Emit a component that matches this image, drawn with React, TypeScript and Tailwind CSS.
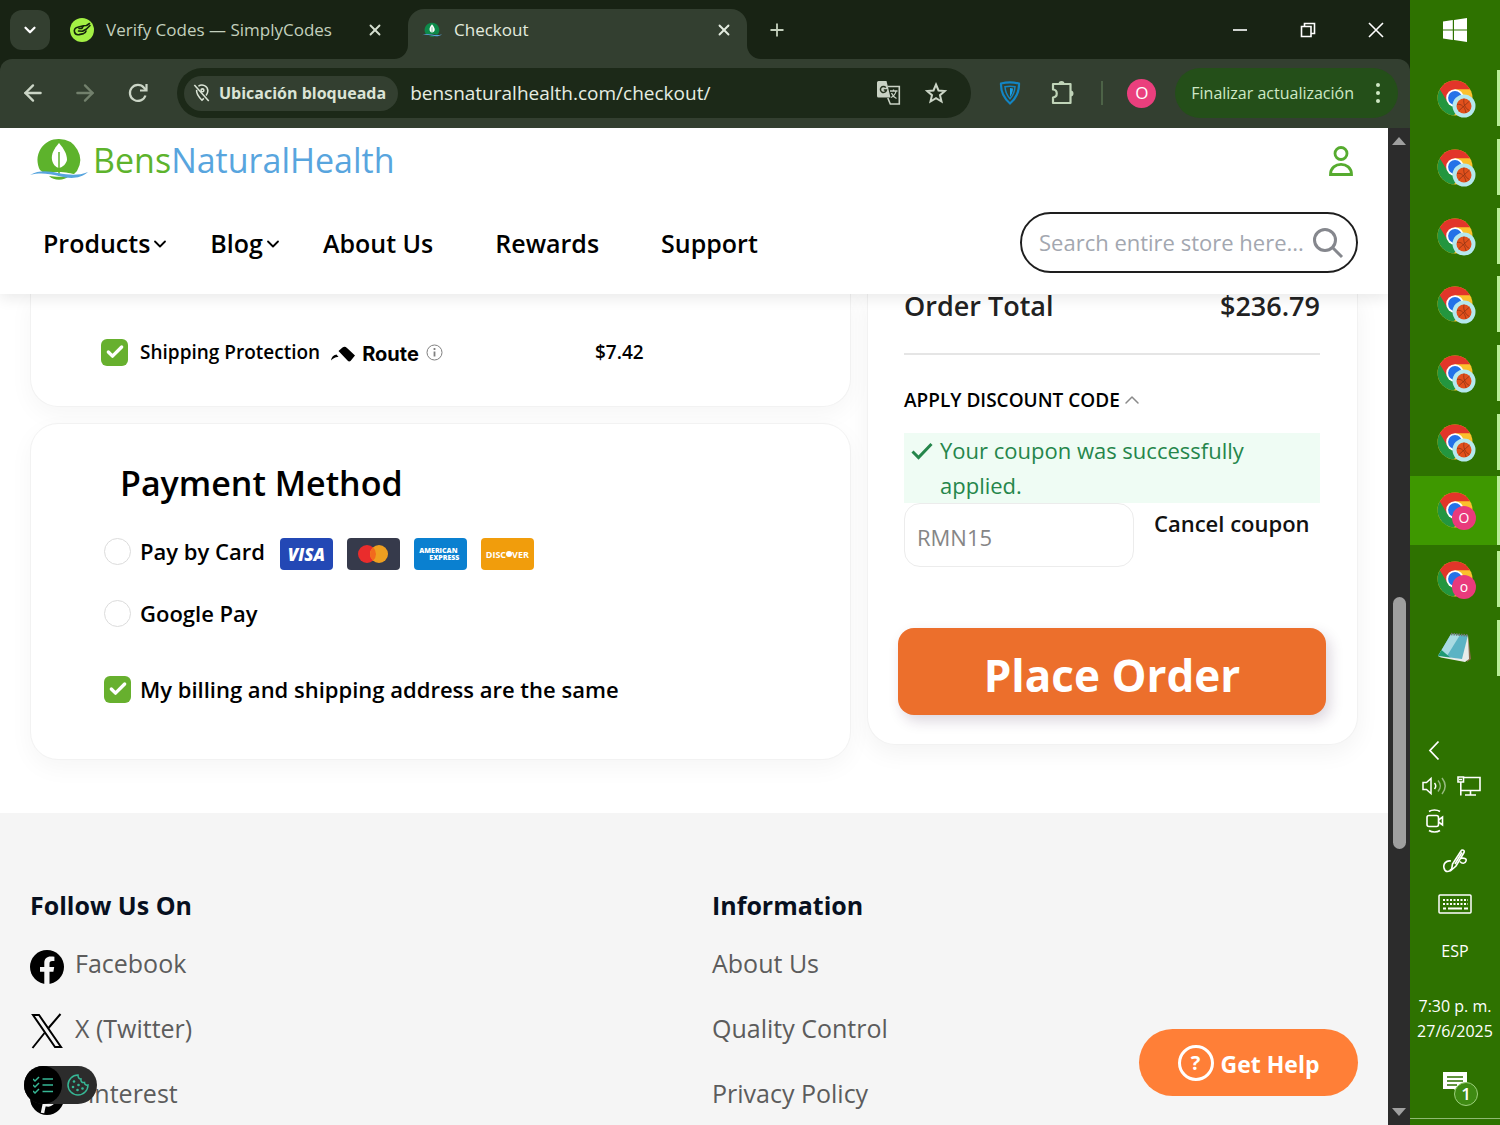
import { ReactNode, useState } from "react";
import { ArrowLeft, ArrowRight, Check, ChevronDown, ChevronUp, Plus, X } from "lucide-react";

const navItems = [
  { label: "Products", menu: true },
  { label: "Blog", menu: true },
  { label: "About Us", menu: false },
  { label: "Rewards", menu: false },
  { label: "Support", menu: false },
];

const taskbarApps = ["ball", "ball", "ball", "ball", "ball", "ball", "active", "profile", "notepad"];

/* ---------- icons ---------- */

function SimplyCodesIcon() {
  return (
    <svg viewBox="0 0 24 24" className="size-6 shrink-0" aria-hidden="true">
      <circle cx="12" cy="12" r="12" fill="#a3f044" />
      <g fill="none" stroke="#14240c" strokeWidth="1.600" strokeLinecap="round" strokeLinejoin="round">
        <path d="M12.500 8 7.500 9.200a3.700 3.700 0 0 0-3 4.800c.6 2.200 2.300 3 4.500 2.600l4.500-1a3.600 3.600 0 0 0 2.500-2.600" />
        <path d="m8.500 13 4 .3 4-2.300L20 7.500M12 10l1.500-2.200 3-.3 3-2M9 10.500h3" />
      </g>
    </svg>
  );
}

function LeafIcon({ className, disc }: { className: string; disc: string }) {
  return (
    <svg viewBox="0 0 58 44" className={className} aria-hidden="true">
      <path d="M29 1a21 21 0 0 0-19 31l4 3c8-2 24-1 30 1l3-3A21 21 0 0 0 29 1Z" fill={disc} />
      <path d="M19 38c6 1 14 1 20 0-5 5-15 5-20 0Z" fill={disc} />
      <path d="M29 5c-5 6-8 11-7 17 1 4 3 7 7 8 4-1 7-4 8-8 0-6-3-11-8-17Z" fill="#fff" />
      <path d="M29 14v24" stroke={disc} strokeWidth="1.500" />
      <path d="M0 37c9-5 18-4 28-2 11 2 20 3 30-1-8 7-18 7-29 4-10-2-18-4-29-1Z" fill="#58a5de" />
    </svg>
  );
}

function ReloadIcon() {
  return (
    <svg viewBox="0 0 24 24" className="size-6" fill="none" stroke="currentColor" strokeWidth="2.200" aria-hidden="true">
      <path d="M19.500 14.500A8 8 0 1 1 18 6.700l2 2.300" />
      <path d="M20.500 3v6.500H14" />
    </svg>
  );
}

function LocationOffIcon() {
  return (
    <svg viewBox="0 0 20 22" className="h-5 w-[18px]" fill="none" stroke="currentColor" strokeWidth="1.700" aria-hidden="true">
      <path d="M6 3.500A6.500 6.500 0 0 1 16.500 8.500c0 1.800-.8 3.600-2 5.300M4 7.500c-.6 4.200 2.500 8 6 11.500l2-2" />
      <circle cx="10.500" cy="8" r="1.600" />
      <path d="m1.500 2 16 18" />
    </svg>
  );
}

function TranslateIcon() {
  return (
    <svg viewBox="0 0 24 24" className="size-6" aria-hidden="true">
      <path d="M1.500 0h8l4 16.500h-12A1.500 1.500 0 0 1 0 15V1.500A1.500 1.500 0 0 1 1.500 0Z" fill="#c9d2c4" />
      <path d="M10.500 5.500h11.800v17.500h-9l-2.500-6" fill="none" stroke="#c9d2c4" strokeWidth="1.600" />
      <path d="M8.800 6.600A3 3 0 1 0 9.400 9H6.800" fill="none" stroke="#26321f" strokeWidth="1.500" />
      <path d="M13 10h7.500M16.500 8.500V10M19 10c-.5 3-3 5.500-5 6.500M14.500 12c1 2.500 3 4.500 5 5.500" fill="none" stroke="#c9d2c4" strokeWidth="1.300" />
    </svg>
  );
}

function StarIcon() {
  return (
    <svg viewBox="0 0 24 24" className="size-6" fill="none" stroke="currentColor" strokeWidth="2" strokeLinejoin="miter" aria-hidden="true">
      <path d="m12 3.500 2.500 6 6.300.5-4.800 4.200 1.500 6.300L12 17.200l-5.500 3.300L8 14.200 3.200 10l6.300-.5Z" />
    </svg>
  );
}

function ShieldIcon() {
  return (
    <svg viewBox="0 0 22 26" className="h-[26px] w-[22px]" fill="none" aria-hidden="true">
      <path d="M2 3.500c6-1.500 12-1.500 18 0 .3 8-3 15-9 20C5 18.500 1.700 11.500 2 3.500Z" stroke="#1385c4" strokeWidth="2.200" />
      <path d="M6 6.700c3.500-.8 6.500-.8 10 0-.3 5-1.800 8.500-5 12-3.200-3.500-4.700-7-5-12Z" stroke="#1385c4" strokeWidth="1.500" />
      <path d="M11 8v9c1.800-2.500 2.700-5 3-8.500Z" fill="#1ba0e8" />
    </svg>
  );
}

function PuzzleIcon() {
  return (
    <svg viewBox="0 0 26 26" className="size-[26px]" fill="none" stroke="currentColor" strokeWidth="2.200" strokeLinejoin="round" aria-hidden="true">
      <path d="M3 4h17.500v19H3v-5.500c5-.5 5-7.500 0-8Z" />
      <path d="M8.500 4a3 3 0 0 1 6 0ZM20.500 10.500a3 3 0 0 1 0 6Z" fill="currentColor" stroke="none" />
    </svg>
  );
}

function ChromeIcon() {
  return (
    <svg viewBox="0 0 36 36" className="size-9" aria-hidden="true">
      <circle cx="18" cy="18" r="17.500" fill="#fbc02d" />
      <path d="M18 18 2.800 9.300A17.500 17.500 0 0 0 17 35.500l8-13Z" fill="#23963f" />
      <path d="M2.800 9.300a17.500 17.500 0 0 1 30.400 0H18l-7.500 12.700Z" fill="#e2352a" />
      <circle cx="18" cy="18" r="8.800" fill="#fff" />
      <circle cx="18" cy="18" r="6.900" fill="#2472e8" />
    </svg>
  );
}

function BasketballBadge() {
  return (
    <svg viewBox="0 0 24 24" className="size-6" aria-hidden="true">
      <circle cx="12" cy="12" r="11.500" fill="#b5e8ee" />
      <circle cx="12" cy="12" r="7.500" fill="#e2501c" />
      <path d="m6.500 17 11-10M12 4.500c-1 5 1 10 5.500 12M5 10.500c4-1 8 2 9 8.500" fill="none" stroke="#8f3414" strokeWidth=".8" />
    </svg>
  );
}

function NotepadIcon() {
  return (
    <svg viewBox="0 0 36 36" className="size-9" aria-hidden="true">
      <path d="m31 5 3 24-4 3Z" fill="#8a6a4a" />
      <path d="m14 4 17 1.500-5 24.500L1 26Z" fill="#5bb3c4" />
      <path d="m14 4 9 1L9 27.500 1 26Z" fill="#a9dbe2" />
      <path d="m4.500 20 10 8.500L1 26Z" fill="#1f9a74" />
      <path d="m31 5 1 24-4 3-24-4.500L1 26l24 3Z" fill="#e8ecea" />
      <path d="m14 4 17 1.500" stroke="#707a76" strokeWidth="2.500" strokeDasharray="1.500 1" />
    </svg>
  );
}

function FacebookIcon() {
  return (
    <svg viewBox="0 0 34 34" className="mt-[6px] size-[34px]" aria-hidden="true">
      <circle cx="17" cy="17" r="17" />
      <path d="M14.300 34V21.800H10v-4.900h4.300v-3.800c0-4.300 2.500-6.600 6.400-6.600 1.300 0 2.600.1 3.700.3v4.300h-2.100c-2.100 0-2.800 1.200-2.800 2.600v3.200h4.700l-.8 4.900h-3.900V34Z" fill="#f5f5f5" />
    </svg>
  );
}

function XLogo() {
  return (
    <svg viewBox="0 0 34 36" className="mt-1 h-9 w-[34px]" fill="none" stroke="#000" strokeWidth="2" aria-hidden="true">
      <path d="M3 2h6l22 32h-6Z" />
      <path d="M30.500 1 18.500 15M14.500 20 2.500 35" />
    </svg>
  );
}

function PinterestIcon() {
  return (
    <svg viewBox="0 0 34 34" className="mt-2 size-[34px]" aria-hidden="true">
      <circle cx="17" cy="17" r="17" />
      <path d="M12.500 32 16 15M14.500 22c3 3.500 9 2 10.500-5 .8-6-3-9-8-9-6 0-9 5-7.500 10" fill="none" stroke="#f5f5f5" strokeWidth="3.500" />
    </svg>
  );
}

/* ---------- browser chrome ---------- */

function TabStrip() {
  return (
    <div className="flex h-[59px] items-center bg-[#182314] pl-[10px] text-[#c3d0bd]">
      <button aria-label="Search tabs" className="flex size-10 items-center justify-center rounded-xl bg-[#333f30] text-white">
        <ChevronDown className="size-[18px]" strokeWidth={3} />
      </button>
      <div className="ml-5 flex w-[338px] items-center">
        <SimplyCodesIcon />
        <span className="ml-3 flex-1 text-[17px] whitespace-nowrap">Verify Codes — SimplyCodes</span>
        <button aria-label="Close tab" className="mr-6 text-[#d5dfd0]">
          <X className="size-[18px]" strokeWidth={2.500} />
        </button>
      </div>
      <div className="relative flex h-[50px] w-[339px] items-center self-end rounded-t-2xl bg-[#333f30] px-[14px] pb-2 text-[#e3ebdf]">
        <svg viewBox="0 0 14 14" className="absolute bottom-0 -left-[14px] size-[14px]" aria-hidden="true">
          <path d="M14 0v14H0A14 14 0 0 0 14 0Z" fill="#333f30" />
        </svg>
        <svg viewBox="0 0 14 14" className="absolute -right-[14px] bottom-0 size-[14px]" aria-hidden="true">
          <path d="M0 0v14h14A14 14 0 0 1 0 0Z" fill="#333f30" />
        </svg>
        <LeafIcon className="h-4 w-5" disc="#0d8a4a" />
        <span className="ml-3 flex-1 text-[17px]">Checkout</span>
        <button aria-label="Close tab">
          <X className="size-[18px]" strokeWidth={2.500} />
        </button>
      </div>
      <button aria-label="New tab" className="ml-5">
        <Plus className="size-5" strokeWidth={2.200} />
      </button>
      <div className="ml-auto flex items-center gap-[50px] pr-[25px] text-white">
        <button aria-label="Minimize">
          <svg viewBox="0 0 18 18" className="size-[18px]" aria-hidden="true">
            <path d="M2 9h14" stroke="currentColor" strokeWidth="1.600" />
          </svg>
        </button>
        <button aria-label="Restore">
          <svg viewBox="0 0 18 18" className="size-[18px]" fill="none" stroke="currentColor" strokeWidth="1.600" aria-hidden="true">
            <path d="M2.500 5.500h9.500v10H2.500ZM5.500 5.500v-3H15.500v10H12" />
          </svg>
        </button>
        <button aria-label="Close window">
          <svg viewBox="0 0 18 18" className="size-[18px]" aria-hidden="true">
            <path d="m2 2 14 14M16 2 2 16" stroke="currentColor" strokeWidth="1.600" />
          </svg>
        </button>
      </div>
    </div>
  );
}

function Toolbar() {
  return (
    <div className="bg-[#182314]">
      <div className="flex h-[69px] items-center rounded-t-xl bg-[#333f30] pr-3 pb-px pl-5 text-[#cbd5c6]">
        <button aria-label="Back">
          <ArrowLeft className="size-[26px]" strokeWidth={2.200} />
        </button>
        <button aria-label="Forward" className="ml-[26px] text-[#72806c]">
          <ArrowRight className="size-[26px]" strokeWidth={2.200} />
        </button>
        <button aria-label="Reload" className="ml-7">
          <ReloadIcon />
        </button>
        <div className="ml-[27px] flex h-[50px] flex-1 items-center rounded-full bg-[#1c2918] pr-[23px] pl-[7px]">
          <button className="flex h-[35px] items-center gap-2 rounded-full bg-[#333f30] pr-3 pl-[9px] text-[16px] font-bold whitespace-nowrap text-[#dbe4d6]">
            <LocationOffIcon />
            Ubicación bloqueada
          </button>
          <input
            aria-label="Address"
            defaultValue="bensnaturalhealth.com/checkout/"
            className="ml-3 min-w-0 flex-1 bg-transparent text-[19px] text-[#e6ede2] outline-none"
          />
          <button aria-label="Translate">
            <TranslateIcon />
          </button>
          <button aria-label="Bookmark" className="ml-[23px]">
            <StarIcon />
          </button>
        </div>
        <button aria-label="Shield extension" className="ml-[28px]">
          <ShieldIcon />
        </button>
        <button aria-label="Extensions" className="ml-[29px] text-[#c0d4b8]">
          <PuzzleIcon />
        </button>
        <div className="ml-[25px] h-6 w-[2px] bg-[#4d6347]" />
        <button className="ml-6 flex size-[29px] items-center justify-center rounded-full bg-[#ea3f7d] text-[17px] text-white">O</button>
        <button className="ml-[19px] flex h-[50px] items-center gap-[18px] rounded-full bg-[#244f19] pr-[14px] pl-4 text-[16px] whitespace-nowrap text-[#cfe8c5]">
          Finalizar actualización
          <span className="flex w-3 flex-col items-center gap-1">
            <span className="size-1 rounded-full bg-[#cfe8c5]" />
            <span className="size-1 rounded-full bg-[#cfe8c5]" />
            <span className="size-1 rounded-full bg-[#cfe8c5]" />
          </span>
        </button>
      </div>
    </div>
  );
}

function Scrollbar() {
  return (
    <div className="flex w-[22px] shrink-0 flex-col items-center bg-[#2c2c2c]">
      <svg viewBox="0 0 14 8" className="mt-[9px] h-2 w-[14px]" aria-hidden="true">
        <path d="m7 0 7 8H0Z" fill="#a0a0a0" />
      </svg>
      <div className="mt-[452px] h-[252px] w-[13px] rounded-full bg-[#9f9f9f]" />
      <svg viewBox="0 0 14 8" className="mt-auto mb-[9px] h-2 w-[14px]" aria-hidden="true">
        <path d="m7 8 7-8H0Z" fill="#a0a0a0" />
      </svg>
    </div>
  );
}

/* ---------- store page ---------- */

function SiteHeader() {
  return (
    <header className="relative z-10 shrink-0 bg-white px-[30px] shadow-[0_4px_14px_rgba(0,0,0,0.09)]">
      <div className="flex h-[66px] items-center justify-between pr-1">
        <a href="#home" className="flex items-center gap-[5px] pb-[2px] text-[34px] leading-none text-[#58a5de]">
          <LeafIcon className="h-11 w-[58px]" disc="#5db32c" />
          <span>
            <span className="text-[#5db32c]">Bens</span>NaturalHealth
          </span>
        </a>
        <a href="#account" aria-label="My account">
          <svg viewBox="0 0 26 30" className="h-[30px] w-[26px]" fill="none" stroke="#56ab2f" strokeWidth="2.800" aria-hidden="true">
            <circle cx="13" cy="7.500" r="6" />
            <path d="M2.500 28.500c0-13.500 21-13.500 21 0Z" />
          </svg>
        </a>
      </div>
      <div className="flex items-center pt-[18px] pb-[21px]">
        <nav className="flex flex-1 gap-10 pt-[2px] pl-[13px] text-[25px] font-semibold text-black">
          {navItems.map((item) => (
            <a key={item.label} href="#nav" className={item.menu ? "flex items-center whitespace-nowrap" : "pr-[22px] whitespace-nowrap"}>
              {item.label}
              {item.menu && <ChevronDown className="size-5" strokeWidth={2.200} />}
            </a>
          ))}
        </nav>
        <div className="flex h-[61px] w-[338px] items-center rounded-full border-2 border-[#1e1e1e] pr-3 pl-[17px]">
          <input
            aria-label="Search"
            placeholder="Search entire store here..."
            className="min-w-0 flex-1 bg-transparent text-[22px] outline-none placeholder:text-[#a3a7b0]"
          />
          <button aria-label="Search store">
            <svg viewBox="0 0 32 32" className="size-8" fill="none" stroke="#85878d" strokeWidth="3" aria-hidden="true">
              <circle cx="13" cy="13" r="10.500" />
              <path d="m20.500 20.500 9.500 9.500" />
            </svg>
          </button>
        </div>
      </div>
    </header>
  );
}

function GreenCheckbox({ id }: { id: string }) {
  return (
    <span className="grid size-[27px] shrink-0">
      <input
        id={id}
        type="checkbox"
        defaultChecked
        className="peer col-start-1 row-start-1 size-[27px] appearance-none rounded-md bg-white ring-1 ring-[#ddd] ring-inset checked:bg-[#67b02e] checked:ring-0"
      />
      <Check className="pointer-events-none col-start-1 row-start-1 size-5 place-self-center text-white" strokeWidth={4} />
    </span>
  );
}

function CardBadge({ color, children }: { color: string; children: ReactNode }) {
  return <span className={`flex h-8 w-[53px] flex-col items-center justify-center rounded-[4px] text-white ${color}`}>{children}</span>;
}

function PaymentSection() {
  const [method, setMethod] = useState("");
  const radioCls = "size-[27px] shrink-0 appearance-none rounded-full border border-[#dcdcdc] bg-white checked:border-8 checked:border-[#67b02e]";

  return (
    <section className="rounded-[28px] border border-[#f2f2f2] bg-white pt-[35px] pb-[52px] pl-[73px] shadow-[0_8px_24px_rgba(0,0,0,0.04)]">
      <h2 className="pl-4 text-[34px] leading-[48px] font-semibold text-black">Payment Method</h2>
      <div className="mt-[26px] flex h-9 items-center text-[22px] font-semibold text-black">
        <input id="card" type="radio" name="method" className={radioCls} checked={method === "card"} onChange={() => setMethod("card")} />
        <label htmlFor="card" className="pl-[9px]">
          Pay by Card
        </label>
        <div className="flex gap-[14px] pt-[6px] pl-[15px]">
          <CardBadge color="bg-[#2348b5]">
            <span className="text-[17px] leading-none font-extrabold italic">VISA</span>
          </CardBadge>
          <CardBadge color="bg-[#363a4b]">
            <svg viewBox="0 0 30 18" className="h-[18px] w-[30px]" role="img" aria-label="Mastercard">
              <circle cx="9" cy="9" r="9" fill="#ea2c2c" />
              <circle cx="21" cy="9" r="9" fill="#ee9f20" />
              <path d="M15 2.300a9 9 0 0 1 0 13.400 9 9 0 0 1 0-13.400Z" fill="#f26a1d" />
            </svg>
          </CardBadge>
          <CardBadge color="bg-[#0a80d0]">
            <span className="mr-1 text-[7px] leading-[7px] font-extrabold">AMERICAN</span>
            <span className="ml-2 text-[7px] leading-[7px] font-extrabold">EXPRESS</span>
          </CardBadge>
          <CardBadge color="bg-[#f19d0c]">
            <span className="flex items-center text-[9px] leading-none font-bold">
              DISC
              <span className="size-[6px] rounded-full bg-white" />
              VER
            </span>
          </CardBadge>
        </div>
      </div>
      <div className="mt-[26px] flex h-9 items-center text-[22px] font-semibold text-black">
        <input id="gpay" type="radio" name="method" className={radioCls} checked={method === "gpay"} onChange={() => setMethod("gpay")} />
        <label htmlFor="gpay" className="pl-[9px]">
          Google Pay
        </label>
      </div>
      <div className="mt-10 flex h-9 items-center text-[22px] font-semibold text-black">
        <GreenCheckbox id="same" />
        <label htmlFor="same" className="pl-[9px]">
          My billing and shipping address are the same
        </label>
      </div>
    </section>
  );
}

function ShippingSection() {
  return (
    <section className="flex h-[113px] items-center rounded-b-[28px] border border-t-0 border-[#f2f2f2] bg-white pt-1 pl-[70px] shadow-[0_8px_24px_rgba(0,0,0,0.04)]">
      <div className="flex w-[494px] items-center whitespace-nowrap text-black">
        <GreenCheckbox id="protection" />
        <label htmlFor="protection" className="pl-3 text-[19px] font-semibold">
          Shipping Protection
        </label>
        <svg viewBox="0 0 24 16" className="mt-1 ml-[11px] h-4 w-6" aria-hidden="true">
          <path d="m7.500 5 4-3.500c1.500-1 3-1 4.500.5l8 7.500-4.500 5.500c-1 .7-2 .5-3-.5Z" />
          <path d="M0 14.500c.5-3.500 2-5.500 5.500-6l2 2.500c-2.500-.5-5 1-7.500 3.500Z" />
        </svg>
        <span className="mt-1 ml-[7px] font-['Inter',sans-serif] text-[20px] leading-6 font-bold">Route</span>
        <svg viewBox="0 0 17 17" className="ml-[7px] size-[17px]" fill="none" stroke="#808080" role="img" aria-label="About shipping protection">
          <circle cx="8.500" cy="8.500" r="7.500" />
          <path d="M8.500 7.500v5M8.500 4v2" strokeWidth="1.800" />
        </svg>
      </div>
      <span className="text-[19px] font-semibold text-black">$7.42</span>
    </section>
  );
}

function OrderSummary() {
  return (
    <section className="w-[491px] shrink-0 self-start rounded-b-[28px] border border-t-0 border-[#f2f2f2] bg-white pr-[37px] pb-[29px] pl-9 shadow-[0_8px_24px_rgba(0,0,0,0.05)]">
      <div className="flex justify-between border-b-2 border-[#e5e5e5] pb-9 text-[27px] leading-[23px] font-semibold text-[#222]">
        <span>Order Total</span>
        <span>$236.79</span>
      </div>
      <button className="mt-[33px] flex h-6 items-center text-[19px] font-semibold text-black">
        APPLY DISCOUNT CODE
        <ChevronUp className="size-6 text-[#8a8a8a]" strokeWidth={1.500} />
      </button>
      <div className="mt-[21px] flex bg-[#effcf4] pr-10 pl-[7px] text-[22px] leading-[35px] text-[#25864b]">
        <svg viewBox="0 0 22 18" className="mt-[9px] mr-[7px] h-[18px] w-[22px] shrink-0" fill="none" stroke="currentColor" strokeWidth="3" aria-hidden="true">
          <path d="m1.500 9.500 6 6L20.500 2" />
        </svg>
        <p>Your coupon was successfully applied.</p>
      </div>
      <div className="flex items-start">
        <input
          aria-label="Discount code"
          defaultValue="RMN15"
          className="h-16 w-[230px] rounded-2xl border border-[#ececec] bg-white px-3 pt-1 text-[22px] text-[#868686] outline-none"
        />
        <button className="ml-5 h-10 text-[22px] font-semibold whitespace-nowrap text-[#111]">Cancel coupon</button>
      </div>
      <div className="-mx-[6px] mt-[61px]">
        <button className="h-[87px] w-full rounded-2xl bg-[#ec6f2c] pt-[6px] text-[44px] leading-none font-bold text-white shadow-[4px_6px_14px_rgba(60,30,70,0.18)]">
          Place Order
        </button>
      </div>
    </section>
  );
}

function SiteFooter() {
  const linkCls = "flex h-9 items-center text-[25px] whitespace-nowrap text-[#5c5c5c]";

  return (
    <footer className="grid flex-1 grid-cols-2 content-start gap-x-9 bg-[#f5f5f5] px-[30px] pt-[74px]">
      <div>
        <h3 className="text-[25px] leading-9 font-bold text-[#07101f]">Follow Us On</h3>
        <div className="mt-[23px] flex flex-col gap-[29px]">
          <a href="#facebook" className={linkCls}>
            <FacebookIcon />
            <span className="pl-[11px]">Facebook</span>
          </a>
          <a href="#x" className={linkCls}>
            <XLogo />
            <span className="pl-[11px]">X (Twitter)</span>
          </a>
          <a href="#pinterest" className={linkCls}>
            <PinterestIcon />
            <span className="pl-[9px]">Pinterest</span>
          </a>
        </div>
      </div>
      <div>
        <h3 className="text-[25px] leading-9 font-bold text-[#07101f]">Information</h3>
        <div className="mt-[23px] flex flex-col gap-[29px]">
          <a href="#about" className={linkCls}>
            About Us
          </a>
          <a href="#quality" className={linkCls}>
            Quality Control
          </a>
          <a href="#privacy" className={linkCls}>
            Privacy Policy
          </a>
        </div>
      </div>
    </footer>
  );
}

function FloatingWidgets() {
  return (
    <>
      <div className="absolute bottom-[21px] left-6 flex h-[38px] w-[73px] items-center rounded-full bg-[#2c2c2c] text-[#36b795]">
        <button aria-label="Consent list" className="flex size-[38px] items-center justify-center rounded-full bg-black">
          <svg viewBox="0 0 20 18" className="h-[18px] w-5" fill="none" stroke="currentColor" strokeWidth="1.500" aria-hidden="true">
            <path d="m0 3 2 2 4-4M0 9l2 2 4-4M0 15l2 2 4-4M9.500 3H20M9.500 9H20M9.500 15.500H20" />
          </svg>
        </button>
        <button aria-label="Cookie settings" className="ml-[5px]">
          <svg viewBox="0 0 22 22" className="size-[22px]" fill="none" stroke="currentColor" strokeWidth="1.500" aria-hidden="true">
            <path d="M11 1a10 10 0 1 0 10 10c-2 .5-3.500-.5-3.500-2.500-2.500.5-4-1-3.500-3.500-2 0-3-1.500-3-4Z" />
            <g fill="currentColor" stroke="none">
              <circle cx="7" cy="7.500" r="1.300" />
              <circle cx="6" cy="13" r="1.300" />
              <circle cx="11.500" cy="11" r="1.300" />
              <circle cx="10.500" cy="16" r="1.300" />
              <circle cx="15.500" cy="14.500" r="1.300" />
            </g>
          </svg>
        </button>
      </div>
      <button className="absolute right-[30px] bottom-[29px] flex h-[67px] w-[219px] items-center justify-center gap-[7px] rounded-full bg-[#ff7f37] text-[23px] font-bold text-white">
        <span className="flex size-9 items-center justify-center rounded-full border-[3px] border-white text-[20px]">?</span>
        <span className="pt-1">Get Help</span>
      </button>
    </>
  );
}

/* ---------- windows taskbar ---------- */

function TaskbarApp({ kind }: { kind: string }) {
  const active = kind === "active";

  return (
    <button aria-label={kind === "notepad" ? "Notepad" : "Chrome"} className={`flex flex-1 items-center justify-between pl-[27px] ${active ? "bg-[#3e9800]" : ""}`}>
      <span className="relative">
        {kind === "notepad" ? <NotepadIcon /> : <ChromeIcon />}
        {kind === "ball" && (
          <span className="absolute top-[14px] left-[15px]">
            <BasketballBadge />
          </span>
        )}
        {(active || kind === "profile") && (
          <span className="absolute top-[14px] left-[15px] flex size-6 items-center justify-center rounded-full bg-[#e93a7c] text-[14px] leading-none text-white">
            {active ? "O" : "o"}
          </span>
        )}
      </span>
      <span className={active ? "w-[3px] self-stretch bg-[#b8ee96]" : "h-14 w-[3px] bg-[#b8ee96]"} />
    </button>
  );
}

function Taskbar() {
  return (
    <aside className="flex w-[90px] shrink-0 flex-col bg-[#2e7200] text-white">
      <button aria-label="Start" className="flex h-16 items-center justify-center pb-1">
        <svg viewBox="0 0 24 24" className="size-6" fill="#fff" aria-hidden="true">
          <path d="M0 3.400 9.800 2v9.400H0ZM11 1.900 24 0v11.400H11ZM0 12.600h9.800V22L0 20.600ZM11 12.600h13V24l-13-1.900Z" />
        </svg>
      </button>
      <div className="flex h-[618px] flex-col">
        {taskbarApps.map((kind, i) => (
          <TaskbarApp key={i} kind={kind} />
        ))}
      </div>
      <div className="mt-[56px] flex flex-col pl-3">
        <button aria-label="Show hidden icons" className="self-start">
          <svg viewBox="0 0 24 24" className="size-6" fill="none" stroke="currentColor" strokeWidth="1.800" aria-hidden="true">
            <path d="M16.500 3.500 8 12.500l8.500 9" />
          </svg>
        </button>
        <div className="mt-3 flex items-center gap-[11px]">
          <svg viewBox="0 0 24 24" className="size-6" fill="none" stroke="currentColor" strokeWidth="1.500" role="img" aria-label="Volume">
            <path d="M1 8.500h3.500L9 4.500v15l-4.500-4H1Z" />
            <path d="M12.500 9c1.500 1.800 1.500 4.200 0 6" />
            <path d="M16 6.500c3 3.300 3 7.700 0 11M20 4c4 5 4 11 0 16" opacity=".5" />
          </svg>
          <svg viewBox="0 0 24 24" className="size-6" fill="none" stroke="currentColor" strokeWidth="1.600" role="img" aria-label="Network">
            <path d="M6.500 3.500H23v13H4.500M13.500 16.500V21M8 21h11M1 3h5.500v5H1ZM3.800 8v13.500M2 5.500h3" />
          </svg>
        </div>
        <svg viewBox="0 0 24 24" className="mt-[11px] size-6" fill="none" stroke="currentColor" strokeWidth="1.600" role="img" aria-label="Camera">
          <rect x="5" y="6.500" width="11.500" height="11" rx="2" />
          <path d="m16.500 11 4-3v8l-4-3M7 2.500c3-2 8-2 11 0M7 21.500c3 2 8 2 11 0" />
        </svg>
      </div>
      <div className="mt-4 flex flex-col items-center">
        <svg viewBox="0 0 24 24" className="size-6" fill="none" stroke="currentColor" strokeWidth="1.600" role="img" aria-label="Pen">
          <path d="M8 12c-5-1-8 3-7 7 1 5 6 4 7 1M8.500 21l1-6L18 2c1-2 4-.5 3 1.500L13 17ZM17 9.500c4-1 7 0 6 2.500-1 3-4 3-6 .5" />
          <path d="m12 15 7-11.500" />
        </svg>
        <svg viewBox="0 0 34 20" className="mt-[21px] h-5 w-[34px]" fill="none" stroke="currentColor" strokeWidth="1.500" role="img" aria-label="Touch keyboard">
          <rect x="1" y="1" width="32" height="18" rx="1" />
          <path d="M5 6h25M5 10h25" strokeDasharray="2 1.500" strokeWidth="2" />
          <path d="M5 14.500h3M10 14.500h14M26 14.500h4" strokeWidth="2" />
        </svg>
        <button className="mt-[25px] text-[16px] leading-6">ESP</button>
        <div className="mt-[31px] text-center text-[16px] leading-[25px] whitespace-nowrap">
          7:30 p. m.
          <br />
          27/6/2025
        </div>
      </div>
      <button aria-label="Notifications" className="relative mt-[27px] ml-8 flex size-9 items-start">
        <svg viewBox="0 0 26 26" className="size-[26px]" aria-hidden="true">
          <path d="M1 1h24v17h-7v6l-6-6H1Z" fill="#fff" />
          <path d="M5 6h16M5 10h16M5 14h10" stroke="#2e7200" strokeWidth="1.500" />
        </svg>
        <span className="absolute top-[11px] left-3 flex size-6 items-center justify-center rounded-full border border-[#9ccf7b] bg-[#3e8a12] text-[17px] font-semibold">1</span>
      </button>
      <div className="mt-auto mb-[6px] h-px bg-[#8fb973]" />
    </aside>
  );
}

export default function App() {
  return (
    <div className="flex h-screen overflow-hidden font-['Open_Sans','Noto_Sans',sans-serif]">
      <div className="flex min-w-0 flex-1 flex-col">
        <TabStrip />
        <Toolbar />
        <div className="flex min-h-0 flex-1">
          <div className="relative flex min-w-0 flex-1 flex-col overflow-hidden bg-white">
            <SiteHeader />
            <main className="flex shrink-0 gap-4 px-[30px] pb-[53px]">
              <div className="flex min-w-0 flex-1 flex-col gap-4">
                <ShippingSection />
                <PaymentSection />
              </div>
              <OrderSummary />
            </main>
            <SiteFooter />
            <FloatingWidgets />
          </div>
          <Scrollbar />
        </div>
      </div>
      <Taskbar />
    </div>
  );
}
